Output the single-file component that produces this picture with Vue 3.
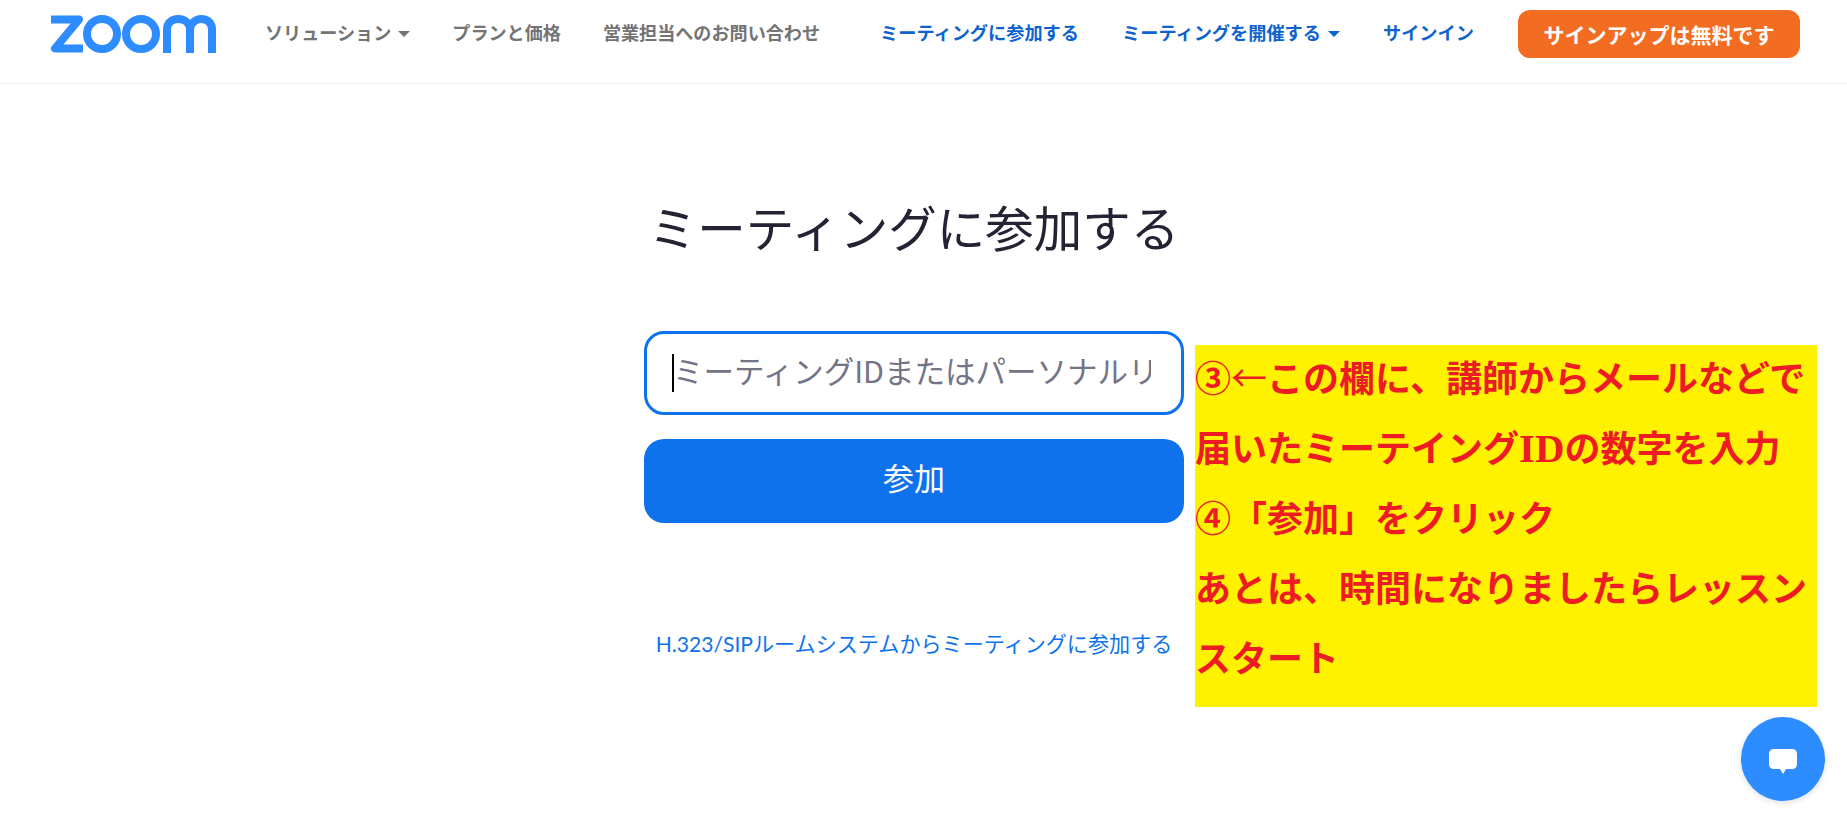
<script setup>
const leftNav = [
  { label: 'ソリューション', caret: true },
  { label: 'プランと価格' },
  { label: '営業担当へのお問い合わせ' },
]
const rightNav = [
  { label: 'ミーティングに参加する' },
  { label: 'ミーティングを開催する', caret: true },
  { label: 'サインイン' },
]
</script>

<template>
  <div class="page">
    <header class="header">
      <svg class="logo" viewBox="0 0 166 38" width="166" height="38" aria-label="zoom">
        <g fill="none" stroke="#2d8cff" stroke-width="8">
          <path d="M1 4.5H29L5 33.5H33" stroke-linejoin="round" />
          <circle cx="52" cy="19" r="15" />
          <circle cx="91" cy="19" r="15" />
          <path d="M117 38V14C117 8 122 4 128 4C135 4 140 8 140 15V38" />
          <path d="M140 15C140 8 146 4 151 4C158 4 162 8 162 15V38" />
        </g>
      </svg>
      <nav class="nav nav-left">
        <a v-for="item in leftNav" :key="item.label" class="nav-item">
          {{ item.label }}<i v-if="item.caret" class="caret"></i>
        </a>
      </nav>
      <nav class="nav nav-right">
        <a v-for="item in rightNav" :key="item.label" class="nav-item">
          {{ item.label }}<i v-if="item.caret" class="caret"></i>
        </a>
      </nav>
      <button class="signup">サインアップは無料です</button>
    </header>

    <main class="main">
      <h1 class="title">ミーティングに参加する</h1>
      <div class="field">
        <input class="input" placeholder="ミーティングIDまたはパーソナルリンク名" />
        <span class="text-caret"></span>
      </div>
      <button class="join">参加</button>
      <a class="sip">H.323/SIPルームシステムからミーティングに参加する</a>
    </main>

    <aside class="note">
      <p>③<span class="arrow">←</span>この欄に、講師からメールなどで</p>
      <p>届いたミーテイング<span class="latin">ID</span>の数字を入力</p>
      <p>④「参加」をクリック</p>
      <p>あとは、時間になりましたらレッスン</p>
      <p>スタート</p>
    </aside>

    <button class="chat" aria-label="chat">
      <svg viewBox="0 0 28 26" width="28" height="26">
        <path fill="#fff" d="M5 0H23C26 0 28 2 28 5V15C28 18 26 20 23 20H17L14 25L11 20H5C2 20 0 18 0 15V5C0 2 2 0 5 0Z" />
      </svg>
    </button>
  </div>
</template>

<style>
html, body { margin: 0; background: #fff; overflow: hidden; }
</style>

<style scoped>
.page {
  position: relative;
  width: 1847px;
  height: 823px;
  overflow: hidden;
  background: #fff;
  font-family: "Lato", "Noto Sans CJK JP", sans-serif;
}
.header {
  display: flex;
  align-items: center;
  box-sizing: border-box;
  height: 84px;
  padding: 0 48px 0 50px;
  border-bottom: 1px solid #ededf0;
}
.logo { flex: none; margin-top: -15px; }
.nav {
  display: flex;
  align-items: center;
  margin-top: -19px;
  font-weight: 700;
  font-family: "Noto Sans CJK JP", sans-serif;
}
.nav-left { gap: 42px; margin-left: 49px; font-size: 18.1px; color: #747474; }
.nav-right { gap: 43px; margin-left: 60px; font-size: 18.2px; color: #0e63ce; }
.nav-item { display: flex; align-items: center; white-space: nowrap; }
.caret {
  width: 0;
  height: 0;
  margin-left: 7px;
  margin-top: 3px;
  border-left: 6px solid transparent;
  border-right: 6px solid transparent;
  border-top: 6px solid currentColor;
}
.signup {
  flex: none;
  width: 282px;
  height: 48px;
  margin: -15px 0 0 44px;
  border: 0;
  border-radius: 12px;
  background: #f26d21;
  color: #fff;
  font: 700 21px "Noto Sans CJK JP", sans-serif;
}
.main {
  display: flex;
  flex-direction: column;
  width: 540px;
  margin-left: 644px;
}
.title {
  margin: 106px 0 0;
  height: 72px;
  font: 400 48.5px/72px "Noto Sans CJK JP", sans-serif;
  color: #232333;
  text-align: center;
  white-space: nowrap;
}
.field { position: relative; margin-top: 69px; }
.input {
  display: block;
  box-sizing: border-box;
  width: 100%;
  height: 84px;
  padding: 0 30px 7px 26px;
  border: 3px solid #0e72ed;
  border-radius: 20px;
  outline: 0;
  font: 400 30.5px "Noto Sans CJK JP", sans-serif;
  background: #fff;
}
.input::placeholder { color: #747487; opacity: 1; }
.text-caret {
  position: absolute;
  left: 28px;
  top: 23px;
  width: 2px;
  height: 38px;
  background: #000;
}
.join {
  height: 84px;
  margin-top: 24px;
  padding: 0 0 10px;
  border: 0;
  border-radius: 20px;
  background: #0e72ed;
  color: #fff;
  font: 400 31px "Noto Sans CJK JP", sans-serif;
}
.sip {
  margin-top: 106px;
  color: #0e72ed;
  font-size: 21.1px;
  line-height: 30px;
  text-align: center;
  white-space: nowrap;
}
.note {
  position: absolute;
  left: 1195px;
  top: 345px;
  box-sizing: border-box;
  width: 622px;
  height: 362px;
  background: #fff200;
  color: #ed1c24;
  font: 700 36px/62px "Noto Sans CJK JP", sans-serif;
}
.note p { height: 70px; margin: 0; white-space: nowrap; }
.arrow { font-weight: 400; }
.latin { font-family: "Liberation Serif", serif; font-size: 41px; }
.chat {
  position: absolute;
  left: 1741px;
  top: 717px;
  display: flex;
  align-items: center;
  justify-content: center;
  width: 84px;
  height: 84px;
  padding: 5px 0 0;
  border: 0;
  border-radius: 50%;
  background: #2d8cff;
  box-shadow: 0 2px 6px rgba(0, 0, 0, 0.12);
}
</style>
